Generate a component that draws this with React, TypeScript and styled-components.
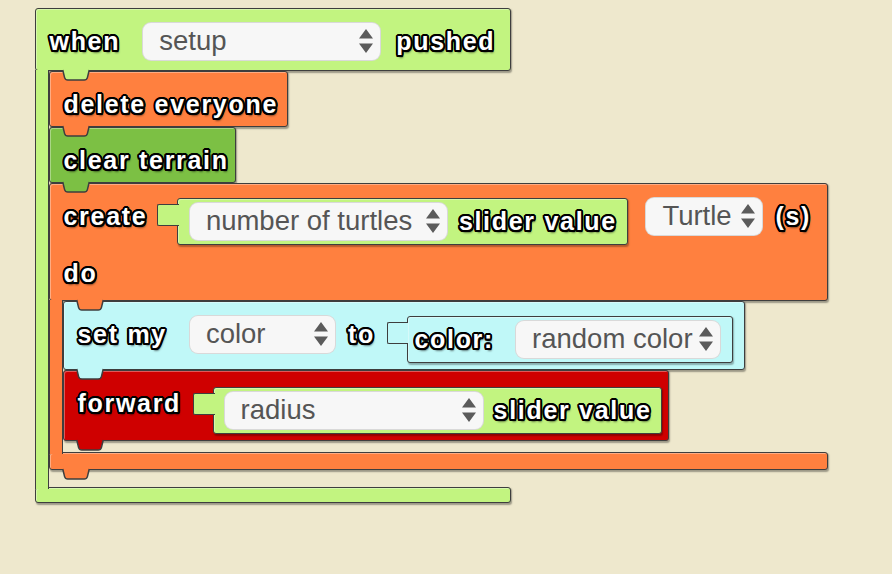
import React from "react";
import styled, { createGlobalStyle } from "styled-components";

const colors = {
  canvas: "#eee8cd",
  lime: "#c2f480",
  orange: "#ff803f",
  grass: "#7cc044",
  aqua: "#c0f8f8",
  red: "#cf0000",
  edge: "#3e3e3e",
  field: "#f7f7f7",
  fieldText: "#555555",
  arrow: "#5b5b5b",
};

const GlobalStyle = createGlobalStyle`
  html, body {
    margin: 0;
    padding: 0;
    background: ${colors.canvas};
  }
  body {
    font-family: "Liberation Sans", Arial, sans-serif;
  }
`;

const Workspace = styled.div`
  width: 892px;
  height: 574px;
  box-sizing: border-box;
  padding: 8px 0 0 35px;
  overflow: hidden;
`;

const Bar = styled.div<{ $color: string; $w: number; $h: number; $pt?: number }>`
  position: relative;
  box-sizing: border-box;
  width: ${(p) => p.$w}px;
  height: ${(p) => p.$h}px;
  padding: ${(p) => p.$pt ?? 12.5}px 0 0 13.5px;
  background: ${(p) => p.$color};
  border: 1.5px solid ${colors.edge};
  border-radius: 3px;
  box-shadow: inset 1px 1px 0 rgba(255, 255, 255, 0.35),
    1px 1.5px 1.5px rgba(0, 0, 0, 0.35);
`;

const Row = styled.div<{ $mt?: number }>`
  display: flex;
  align-items: flex-start;
  margin-top: ${(p) => p.$mt ?? 0}px;
`;

/* white bold text with a black outline, drawn as a ring of shadows */
const Label = styled.span<{ $ml?: number; $top?: number }>`
  margin: ${(p) => p.$top ?? 5.5}px 0 0 ${(p) => p.$ml ?? 0}px;
  font: bold 25px/28px "Liberation Sans", Arial, sans-serif;
  letter-spacing: 1.7px;
  color: #fff;
  white-space: pre;
  text-shadow: -2px 0 0 #000, 2px 0 0 #000, 0 -2px 0 #000, 0 2px 0 #000,
    -1.5px -1.5px 0 #000, 1.5px -1.5px 0 #000, -1.5px 1.5px 0 #000,
    1.5px 1.5px 0 #000, -1.8px -0.8px 0 #000, 1.8px -0.8px 0 #000,
    -1.8px 0.8px 0 #000, 1.8px 0.8px 0 #000, -0.8px -1.8px 0 #000,
    0.8px -1.8px 0 #000, -0.8px 1.8px 0 #000, 0.8px 1.8px 0 #000,
    1.5px 2.5px 2px rgba(0, 0, 0, 0.5);
`;

const Field = styled.div<{ $w: number; $ml?: number }>`
  box-sizing: border-box;
  flex: none;
  width: ${(p) => p.$w}px;
  height: 39px;
  margin-left: ${(p) => p.$ml ?? 0}px;
  display: flex;
  align-items: center;
  justify-content: space-between;
  padding: 0 7px 0 16px;
  background: ${colors.field};
  border: 1px solid rgba(0, 0, 0, 0.12);
  border-radius: 9px;
  font: 27.5px/30px "Liberation Sans", Arial, sans-serif;
  color: ${colors.fieldText};
`;

const Reporter = styled.div<{ $ml: number }>`
  display: flex;
  align-items: flex-start;
  margin: 1px 0 0 ${(p) => p.$ml}px;
`;

const Plug = styled.div<{ $color: string }>`
  position: relative;
  z-index: 1;
  box-sizing: border-box;
  width: 21.5px;
  height: 22px;
  margin: 6px -1.5px 0 0;
  background: ${(p) => p.$color};
  border: 1.5px solid ${colors.edge};
  border-right: none;
  border-radius: 2px 0 0 2px;
`;

const ReporterBody = styled.div<{ $color: string; $w: number; $pl: number }>`
  box-sizing: border-box;
  width: ${(p) => p.$w}px;
  height: 47px;
  display: flex;
  align-items: center;
  padding-left: ${(p) => p.$pl}px;
  background: ${(p) => p.$color};
  border: 1.5px solid ${colors.edge};
  border-radius: 3px;
  box-shadow: inset 1px 1px 0 rgba(255, 255, 255, 0.35),
    1px 1.5px 1.5px rgba(0, 0, 0, 0.3);
`;

const NotchSvg = styled.svg<{ $left: number }>`
  position: absolute;
  z-index: 2;
  left: ${(p) => p.$left}px;
  top: 100%;
  overflow: visible;
`;

const CWrap = styled.div`
  display: flex;
  flex-direction: column;
  align-items: flex-start;
`;

const Mouth = styled.div`
  display: flex;
  align-items: stretch;
`;

const Arm = styled.div<{ $color: string }>`
  position: relative;
  z-index: 1;
  box-sizing: border-box;
  width: 14px;
  margin: -1.5px 0;
  background: ${(p) => p.$color};
  border-left: 1.5px solid ${colors.edge};
  border-right: 1.5px solid ${colors.edge};
`;

const Inner = styled.div<{ $gap: number }>`
  display: flex;
  flex-direction: column;
  align-items: flex-start;
  padding-bottom: ${(p) => p.$gap}px;
`;

const Arrows: React.FC = () => (
  <svg width="14" height="24" viewBox="0 0 14 24">
    <path d="M7 0 L14 9.5 H0 Z M0 14.5 H14 L7 24 Z" fill={colors.arrow} />
  </svg>
);

const Dropdown: React.FC<{ text: string; w: number; ml?: number }> = ({
  text,
  w,
  ml,
}) => (
  <Field $w={w} $ml={ml}>
    <span>{text}</span>
    <Arrows />
  </Field>
);

const Notch: React.FC<{ color: string; left: number }> = ({ color, left }) => (
  <NotchSvg $left={left} width="28" height="11" viewBox="0 0 28 11">
    <path
      d="M0.75 0 L2.6 7.6 Q3.3 10 5.8 10 L22.2 10 Q24.7 10 25.4 7.6 L27.25 0"
      fill={color}
      stroke={colors.edge}
      strokeWidth="1.5"
    />
  </NotchSvg>
);

const SliderValue: React.FC<{
  color: string;
  ml: number;
  w: number;
  pl: number;
  children: React.ReactNode;
}> = ({ color, ml, w, pl, children }) => (
  <Reporter $ml={ml}>
    <Plug $color={color} />
    <ReporterBody $color={color} $w={w} $pl={pl}>
      {children}
    </ReporterBody>
  </Reporter>
);

const Statement: React.FC<{
  color: string;
  w: number;
  h: number;
  pt?: number;
  children: React.ReactNode;
}> = ({ color, w, h, pt, children }) => (
  <Bar $color={color} $w={w} $h={h} $pt={pt}>
    <Row>{children}</Row>
    <Notch color={color} left={12} />
  </Bar>
);

const CBlock: React.FC<{
  color: string;
  w: number;
  headH: number;
  footH: number;
  gap: number;
  footNotch?: boolean;
  head: React.ReactNode;
  children: React.ReactNode;
}> = ({ color, w, headH, footH, gap, footNotch, head, children }) => (
  <CWrap>
    <Bar $color={color} $w={w} $h={headH}>
      {head}
      <Notch color={color} left={26} />
    </Bar>
    <Mouth>
      <Arm $color={color} />
      <Inner $gap={gap}>{children}</Inner>
    </Mouth>
    <Bar $color={color} $w={w} $h={footH}>
      {footNotch ? <Notch color={color} left={12} /> : null}
    </Bar>
  </CWrap>
);

const App: React.FC = () => (
  <Workspace>
    <GlobalStyle />
    <CBlock
      color={colors.lime}
      w={476}
      headH={63}
      footH={16}
      gap={17}
      head={
        <Row>
          <Label>when</Label>
          <Dropdown text="setup" w={239} ml={22} />
          <Label $ml={15}>pushed</Label>
        </Row>
      }
    >
      <Statement color={colors.orange} w={239} h={56}>
        <Label>delete everyone</Label>
      </Statement>
      <Statement color={colors.grass} w={187} h={56}>
        <Label>clear terrain</Label>
      </Statement>
      <CBlock
        color={colors.orange}
        w={779}
        headH={118}
        footH={18}
        gap={11}
        footNotch
        head={
          <>
            <Row>
              <Label>create</Label>
              <SliderValue color={colors.lime} ml={10} w={451} pl={10.5}>
                <Dropdown text="number of turtles" w={259} />
                <Label $ml={11} $top={0}>
                  slider value
                </Label>
              </SliderValue>
              <Dropdown text="Turtle" w={118} ml={17} />
              <Label $ml={12}>(s)</Label>
            </Row>
            <Row $mt={9}>
              <Label>do</Label>
            </Row>
          </>
        }
      >
        <Statement color={colors.aqua} w={682} h={69}>
          <Label>set my</Label>
          <Dropdown text="color" w={147} ml={22} />
          <Label $ml={12}>to</Label>
          <SliderValue color={colors.aqua} ml={12} w={326} pl={6.5}>
            <Label $top={0}>color:</Label>
            <Dropdown text="random color" w={206} ml={21} />
          </SliderValue>
        </Statement>
        <Statement color={colors.red} w={606} h={71} pt={14.5}>
          <Label $top={3.5}>forward</Label>
          <SliderValue color={colors.lime} ml={12} w={449} pl={9.5}>
            <Dropdown text="radius" w={260} />
            <Label $ml={10} $top={0}>
              slider value
            </Label>
          </SliderValue>
        </Statement>
      </CBlock>
    </CBlock>
  </Workspace>
);

export default App;
